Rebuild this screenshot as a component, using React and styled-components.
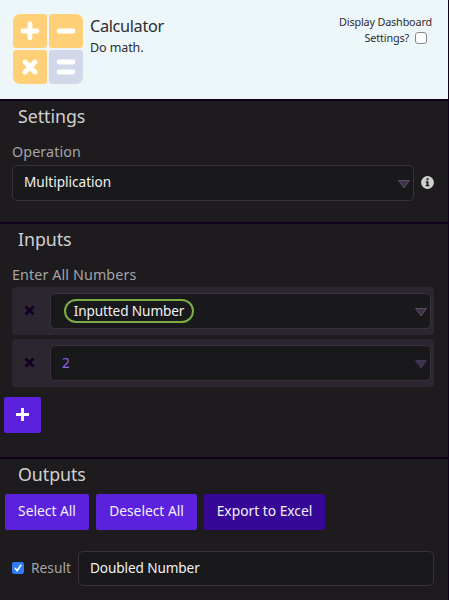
import React from 'react';
import styled, { createGlobalStyle } from 'styled-components';

const GlobalStyle = createGlobalStyle`
  *, *::before, *::after { box-sizing: border-box; }
  body {
    margin: 0;
    background: #1e1b1e;
    font-family: "Noto Sans", "Open Sans", sans-serif;
  }
`;

const Panel = styled.main`
  width: 449px;
  height: 600px;
  overflow: hidden;
  border-right: 1px solid #12001f;
  background: #1e1b1e;
`;

const Header = styled.header`
  display: flex;
  height: 99px;
  padding: 14px 16px 0 13px;
  background: #edf6f9;
  color: #2c2c2e;
`;

const Logo = styled.svg`
  display: block;
  width: 70px;
  height: 70px;
`;

const Heading = styled.div`
  flex: 1;
  padding: 1px 0 0 7px;
`;

const Title = styled.h1`
  margin: 0;
  font-size: 16.3px;
  line-height: 22px;
  font-weight: 400;
  letter-spacing: -0.35px;
`;

const Subtitle = styled.p`
  margin: 1px 0 0;
  font-size: 12.5px;
  line-height: 20px;
  letter-spacing: -0.1px;
`;

const DashboardToggle = styled.label`
  display: flex;
  flex-direction: column;
  align-items: flex-end;
  font-size: 10.8px;
  line-height: 16px;
  letter-spacing: -0.15px;
`;

const ToggleLine = styled.span`
  display: flex;
  align-items: center;
  gap: 6px;
  padding-right: 5px;
`;

const EmptyCheckbox = styled.input`
  appearance: none;
  width: 12px;
  height: 12px;
  margin: 0;
  border: 1px solid #858789;
  border-radius: 3px;
  background: #fff;
`;

const Section = styled.section`
  height: ${(p) => p.$height}px;
  border-top: 2px solid #12001f;
`;

const SectionTitle = styled.h2`
  margin: 0;
  padding: 3px 0 1px 18px;
  color: #d0d0d0;
  font-size: 17.8px;
  line-height: 24px;
  font-weight: 400;
  letter-spacing: -0.05px;
`;

const FieldLabel = styled.div`
  padding: 12px 0 0 12px;
  height: ${(p) => (p.$compact ? 35 : 36)}px;
  color: #a5a3a5;
  font-size: 14.3px;
  line-height: 22px;
  letter-spacing: 0.11px;
`;

const FieldRow = styled.div`
  display: flex;
  align-items: center;
  padding-left: 12px;
  gap: 7px;
`;

const Field = styled.div`
  display: flex;
  align-items: center;
  justify-content: space-between;
  width: ${(p) => p.$width}px;
  height: ${(p) => p.$height || 36}px;
  padding: 0 3px 0 11px;
  border: 1px solid #3a3040;
  border-radius: 5px;
  background: #19191b;
  color: ${(p) => (p.$accent ? '#8e63e8' : '#f1f1f1')};
  font-size: 13.6px;
  line-height: 20px;
  letter-spacing: ${(p) => p.$spacing || 0}px;
`;

const FieldText = styled.span`
  margin-top: ${(p) => (p.$centered ? 0 : -2)}px;
`;

const Chevron = styled.svg`
  display: block;
  width: 12px;
  height: 9px;
  margin-top: 2px;
`;

const Info = styled.svg`
  display: block;
  width: 13px;
  height: 13px;
  margin-top: -2px;
`;

const Token = styled.span`
  display: flex;
  align-items: center;
  justify-content: center;
  width: 130px;
  height: 24px;
  margin-left: 2px;
  margin-top: -1px;
  border: 2px solid #7cad45;
  border-radius: 12px;
  letter-spacing: -0.1px;
`;

const NumberList = styled.div`
  display: grid;
  gap: 4px;
  padding-left: 12px;
`;

const NumberRow = styled.div`
  display: flex;
  align-items: center;
  width: 422px;
  height: 48px;
  padding-left: 12px;
  gap: 16px;
  border-radius: 4px;
  background: #2b2630;
`;

const RemoveIcon = styled.svg`
  display: block;
  width: 11px;
  height: 11px;
  margin: -1px -1px 0 0;
`;

const AddButton = styled.button`
  display: flex;
  align-items: center;
  justify-content: center;
  width: 37px;
  height: 36px;
  margin: 10px 0 0 4px;
  padding: 0 0 2px;
  border: 0;
  border-radius: 2px;
  background: #5b21dc;
`;

const Actions = styled.div`
  display: flex;
  gap: 7px;
  padding: 7px 0 0 5px;
`;

const Action = styled.button`
  width: ${(p) => p.$width}px;
  height: 36px;
  padding: 0 0 2px;
  border: 0;
  border-radius: 2px;
  background: ${(p) => (p.$dark ? '#370896' : '#5b21dc')};
  color: #f3f0fa;
  font: 13.8px/20px "Noto Sans", "Open Sans", sans-serif;
`;

const ResultRow = styled.div`
  display: flex;
  align-items: center;
  padding: 21px 0 0 12px;
`;

const CheckMark = styled.svg`
  display: block;
  width: 12px;
  height: 12px;
  margin-top: -1px;
`;

const ResultLabel = styled.span`
  width: 54px;
  margin-top: -2px;
  padding-left: 7px;
  color: #a5a3a5;
  font-size: 13.8px;
  line-height: 20px;
`;

function CalculatorLogo() {
  return (
    <Logo viewBox="0 0 70 70">
      <path d="M8 0H31Q34 0 34 3V31Q34 34 31 34H3Q0 34 0 31V8Q0 0 8 0Z" fill="#ffd077" />
      <path d="M39 0H62Q70 0 70 8V31Q70 34 67 34H39Q36 34 36 31V3Q36 0 39 0Z" fill="#ffd077" />
      <path d="M3 36H31Q34 36 34 39V67Q34 70 31 70H8Q0 70 0 62V39Q0 36 3 36Z" fill="#ffd077" />
      <path d="M39 36H67Q70 36 70 39V62Q70 70 62 70H39Q36 70 36 67V39Q36 36 39 36Z" fill="#d3d7ea" />
      <g stroke="#fff" strokeLinecap="round" strokeWidth="4.8" fill="none">
        <path d="M10 17H24M17 10V24M46 17H60M46 48H60M46 58H60" />
        <path d="M12 48L22 58M22 48L12 58" />
      </g>
    </Logo>
  );
}

function DropArrow({ accent }) {
  return (
    <Chevron viewBox="0 0 12 9">
      <path d="M.5 .5H11.5L6 8Z" fill="#40314a" stroke={accent ? '#493963' : '#66596d'} strokeWidth=".8" />
    </Chevron>
  );
}

function Remove() {
  return (
    <RemoveIcon viewBox="0 0 11 11">
      <path d="M1.5 1.5L9.5 9.5M9.5 1.5L1.5 9.5" stroke="#140022" strokeWidth="2.7" />
    </RemoveIcon>
  );
}

export default function App() {
  return (
    <>
      <GlobalStyle />
      <Panel>
        <Header>
          <CalculatorLogo />
          <Heading>
            <Title>Calculator</Title>
            <Subtitle>Do math.</Subtitle>
          </Heading>
          <DashboardToggle>
            <span>Display Dashboard</span>
            <ToggleLine>
              Settings?
              <EmptyCheckbox type="checkbox" />
            </ToggleLine>
          </DashboardToggle>
        </Header>

        <Section $height={123}>
          <SectionTitle>Settings</SectionTitle>
          <FieldLabel>Operation</FieldLabel>
          <FieldRow>
            <Field $width={402}>
              <FieldText>Multiplication</FieldText>
              <DropArrow />
            </Field>
            <Info viewBox="0 0 13 13">
              <circle cx="6.5" cy="6.5" r="6.4" fill="#cfcfcf" />
              <path d="M5.5 2.3H7.5V4.2H5.5ZM4.7 5.2H7.5V9H8.3V10.2H4.7V9H5.5V6.4H4.7Z" fill="#1e1b1e" />
            </Info>
          </FieldRow>
        </Section>

        <Section $height={235}>
          <SectionTitle>Inputs</SectionTitle>
          <FieldLabel $compact>Enter All Numbers</FieldLabel>
          <NumberList>
            <NumberRow>
              <Remove />
              <Field $width={381}>
                <Token>Inputted Number</Token>
                <DropArrow />
              </Field>
            </NumberRow>
            <NumberRow>
              <Remove />
              <Field $width={381} $accent>
                <FieldText $centered>2</FieldText>
                <DropArrow accent />
              </Field>
            </NumberRow>
          </NumberList>
          <AddButton aria-label="Add number">
            <svg width="13" height="13" viewBox="0 0 13 13">
              <path d="M6.5 0V13M0 6.5H13" stroke="#fff" strokeWidth="2.8" />
            </svg>
          </AddButton>
        </Section>

        <Section $height={143}>
          <SectionTitle>Outputs</SectionTitle>
          <Actions>
            <Action $width={84}>Select All</Action>
            <Action $width={101}>Deselect All</Action>
            <Action $width={121} $dark>Export to Excel</Action>
          </Actions>
          <ResultRow>
            <CheckMark viewBox="0 0 12 12">
              <rect width="12" height="12" rx="2.2" fill="#2f7bf6" />
              <path d="M3.2 6.4L5.1 8.6L8.8 3.3" fill="none" stroke="#fff" strokeWidth="1.6" strokeLinecap="round" />
            </CheckMark>
            <ResultLabel>Result</ResultLabel>
            <Field $width={356} $height={35} $spacing={-0.1}>
              <FieldText>Doubled Number</FieldText>
            </Field>
          </ResultRow>
        </Section>
      </Panel>
    </>
  );
}
